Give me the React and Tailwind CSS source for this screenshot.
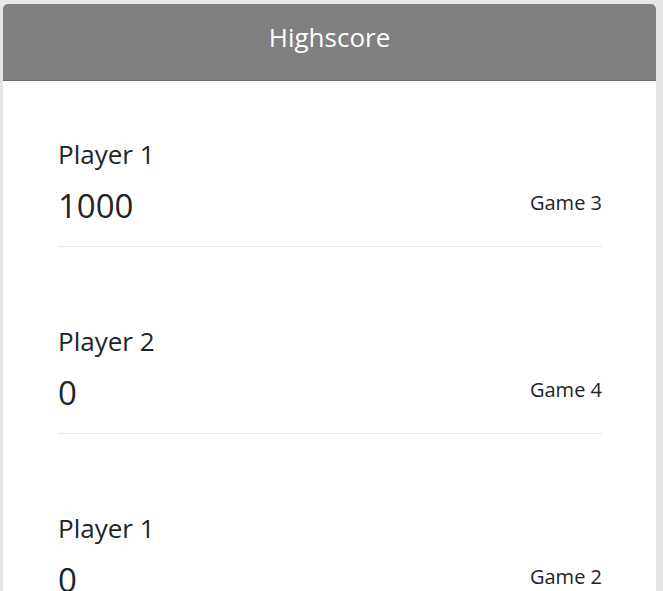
import React from 'react'

const scores = [
  { player: 'Player 1', score: 1000, game: 'Game 3' },
  { player: 'Player 2', score: 0, game: 'Game 4' },
  { player: 'Player 1', score: 0, game: 'Game 2' },
]

export default function App() {
  return (
    <div
      className="min-h-screen bg-[#e6e6e6] pt-[4px] pl-[3px]"
      style={{ fontFamily: '"Open Sans", "Noto Sans", sans-serif' }}
    >
      <div className="w-[653px] bg-white rounded-t-[5px] overflow-hidden">
        {/* Header */}
        <div className="h-[77px] bg-[#808080] border-b border-[#6c6c6c] pt-[20px] text-center">
          <h1 className="text-[26px] leading-none text-white">Highscore</h1>
        </div>

        {/* List */}
        <div className="pt-[60px] pl-[55px] pr-[54px] flex flex-col gap-[81px]">
          {scores.map((s, i) => (
            <div key={i} className="border-b border-[#e6e6e6] pb-[24px] text-[#212529]">
              <div className="text-[26px] leading-none">{s.player}</div>
              <div className="flex justify-between items-start mt-[22px]">
                <div className="text-[33px] leading-none">{s.score}</div>
                <div className="text-[20px] leading-none mt-[4px]">{s.game}</div>
              </div>
            </div>
          ))}
        </div>
      </div>
    </div>
  )
}
